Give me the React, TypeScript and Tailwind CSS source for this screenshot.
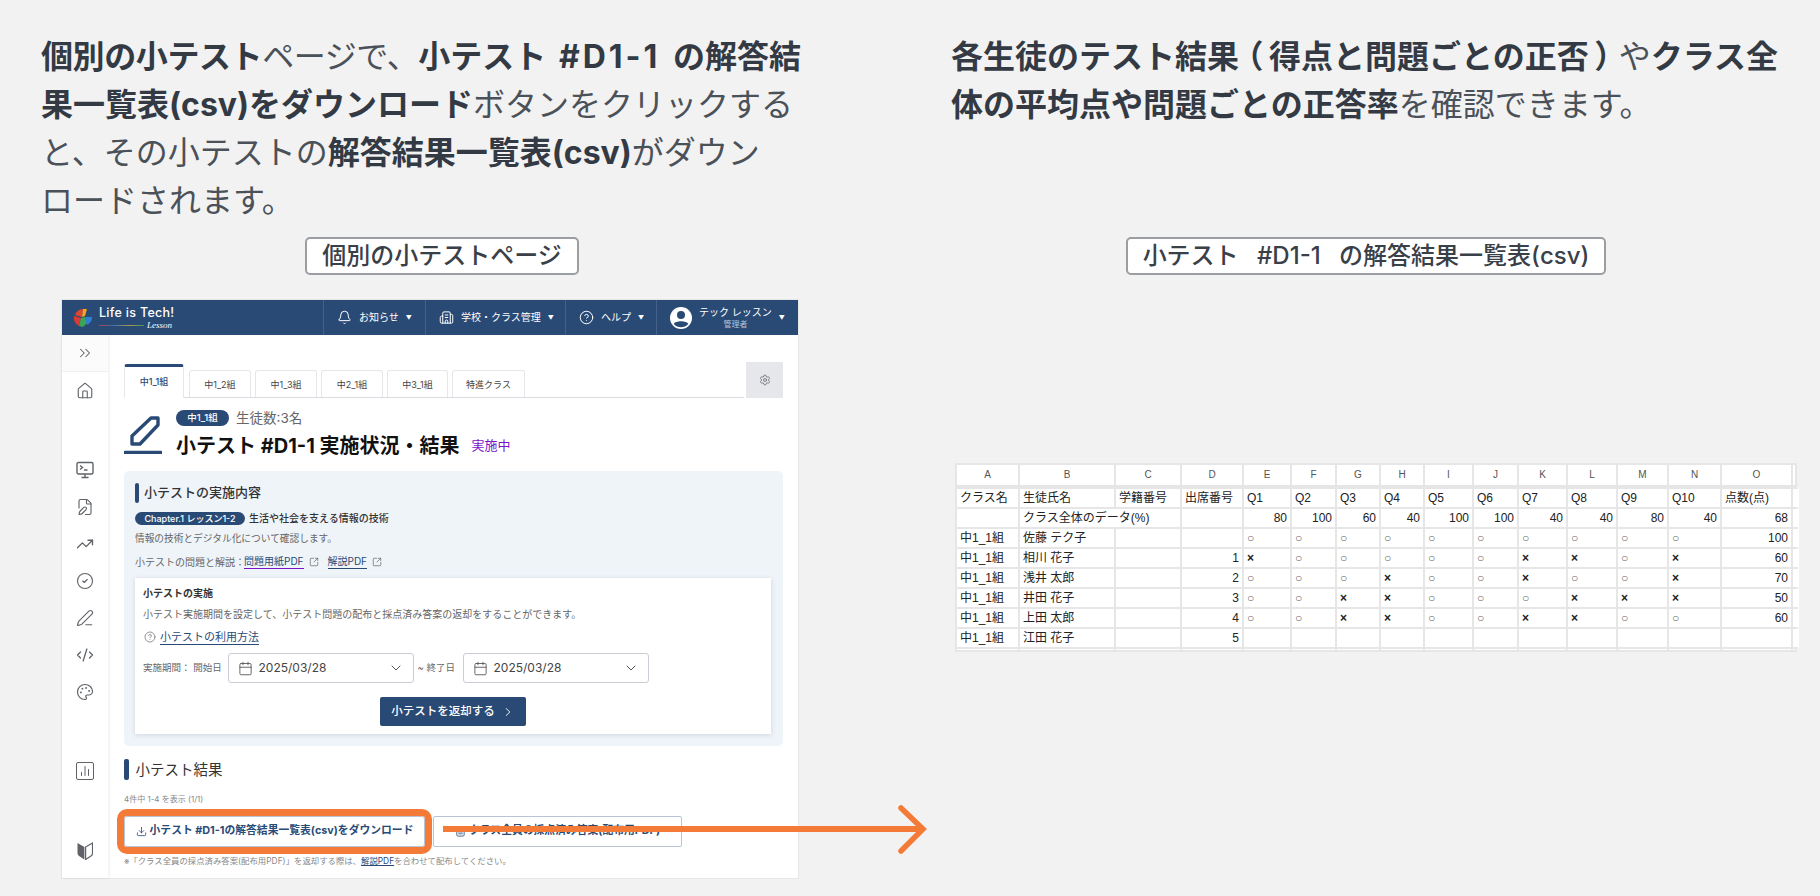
import {
  Bell, Building2, Calendar, ChevronDown, ChevronRight, ChevronsRight, CircleCheck, CircleHelp,
  CodeXml, Download, FilePen, FileText, House, Palette, PenLine, Settings, SquareArrowOutUpRight,
  TrendingUp, ChartNoAxesColumn,
} from 'lucide-react';

const cols = ['A', 'B', 'C', 'D', 'E', 'F', 'G', 'H', 'I', 'J', 'K', 'L', 'M', 'N', 'O', ''];
const percents = ['80', '100', '60', '40', '100', '100', '40', '40', '80', '40', '68'];
const students = [
  { name: '佐藤 テク子', no: '', marks: 'oooooooooo', score: '100' },
  { name: '相川 花子', no: '1', marks: 'xoooooxxox', score: '60' },
  { name: '浅井 太郎', no: '2', marks: 'oooxooxoox', score: '70' },
  { name: '井田 花子', no: '3', marks: 'ooxxoooxxx', score: '50' },
  { name: '上田 太郎', no: '4', marks: 'ooxxooxxoo', score: '60' },
  { name: '江田 花子', no: '5', marks: '', score: '' },
];
const qs = ['Q1', 'Q2', 'Q3', 'Q4', 'Q5', 'Q6', 'Q7', 'Q8', 'Q9', 'Q10'];

function Cell({ children, right, className = '' }: { children?: React.ReactNode; right?: boolean; className?: string }) {
  return (
    <div className={`bg-white h-[18px] leading-[18px] px-[3px] whitespace-nowrap overflow-hidden text-[12px] text-[#222] ${right ? 'text-right' : ''} ${className}`}>
      {children}
    </div>
  );
}

function Mark({ value }: { value?: string }) {
  if (!value) return <Cell />;
  return (
    <Cell className={value === 'x' ? 'text-[9px] font-bold' : 'text-[8px] text-[#666]'}>
      {value === 'x' ? '×' : '○'}
    </Cell>
  );
}

function Sheet() {
  return (
    <div className="ml-[4px] w-[842px] bg-[#e6e6e6] p-[2px] mt-[188px] font-['Liberation_Sans','Noto_Sans_CJK_JP',sans-serif]">
      <div className="grid gap-[2px] grid-cols-[61px_94px_64px_60px_46px_43px_42px_42px_47px_43px_47px_48px_49px_51px_69px_2px]">
        {cols.map((c, i) => (
          <div key={i} className="bg-white h-[20px] leading-[20px] text-center text-[10px] text-[#555] mb-[2px]">{c}</div>
        ))}
        <Cell>クラス名</Cell>
        <Cell>生徒氏名</Cell>
        <Cell>学籍番号</Cell>
        <Cell>出席番号</Cell>
        {qs.map((q) => <Cell key={q}>{q}</Cell>)}
        <Cell>点数(点)</Cell>
        <Cell className="px-0" />

        <Cell />
        <Cell className="col-span-2">クラス全体のデータ(%)</Cell>
        <Cell />
        {percents.map((p, i) => <Cell key={i} right>{p}</Cell>)}
        <Cell className="px-0" />

        {students.map((s) => (
          <div key={s.name} className="contents">
            <Cell>中1_1組</Cell>
            <Cell>{s.name}</Cell>
            <Cell />
            <Cell right>{s.no}</Cell>
            {qs.map((q, i) => <Mark key={q} value={s.marks[i]} />)}
            <Cell right>{s.score}</Cell>
            <Cell className="px-0" />
          </div>
        ))}
        {cols.map((c, i) => (
          <div key={i} className="bg-white h-[1px]" />
        ))}
      </div>
    </div>
  );
}

function Logo() {
  return (
    <div className="flex items-center w-[252px] pl-[2px]">
      <svg width="20" height="20" viewBox="0 0 20 20" className="mr-[6px]">
        <path d="M10 1 A9 9 0 0 0 2 7 L9 9 Z" fill="#e0452f" />
        <path d="M10 1 L14 1 L12 8 L9 9 Z" fill="#f2a61f" />
        <path d="M1 8 L8 10 L6 18 A9 9 0 0 1 1 8 Z" fill="#d93a33" />
        <path d="M8 10 L12 9 L14 15 L10 19 L6 18 Z" fill="#3aa655" />
        <path d="M12 9 L19 9 A9 9 0 0 1 14 17 Z" fill="#2f7fd6" />
      </svg>
      <div className="flex flex-col font-['Inter',sans-serif] text-white">
        <span className="text-[12.5px] leading-[15px] font-medium tracking-[0.3px]">Life is Tech!</span>
        <div className="flex items-center h-[10px]">
          <span className="w-[45px] h-[1px] bg-[linear-gradient(90deg,#b5413c,#3f6fb0,#a89a4a,#3f9a5a)]" />
          <span className="ml-[3px] text-[9px] leading-[9px] italic font-['Liberation_Serif',serif]">Lesson</span>
        </div>
      </div>
    </div>
  );
}

function NavItem({ icon, label, w, sub }: { icon: React.ReactNode; label: string; w: string; sub?: string }) {
  return (
    <div className={`flex items-center h-full border-l border-[#45608a] pl-[13px] text-white ${w}`}>
      {icon}
      {sub ? (
        <div className="flex flex-col items-center ml-[7px]">
          <span className="text-[10px] leading-[13px]">{label}</span>
          <span className="text-[8px] leading-[11px] text-[#b8c4d6]">{sub}</span>
        </div>
      ) : (
        <span className="text-[10px] ml-[7px]">{label}</span>
      )}
      <span className="ml-[7px] text-[6px]">▼</span>
    </div>
  );
}

function Header() {
  return (
    <div className="flex items-center h-[35px] bg-[#2a4a76] pl-[9px] shrink-0">
      <Logo />
      <NavItem w="w-[102px]" icon={<Bell size={15} strokeWidth={1.6} />} label="お知らせ" />
      <NavItem w="w-[140px]" icon={<Building2 size={15} strokeWidth={1.6} />} label="学校・クラス管理" />
      <NavItem w="w-[91px]" icon={<CircleHelp size={15} strokeWidth={1.6} />} label="ヘルプ" />
      <NavItem
        w="flex-1"
        icon={
          <svg width="22" height="22" viewBox="0 0 22 22">
            <circle cx="11" cy="11" r="11" fill="#fff" />
            <circle cx="11" cy="8" r="4" fill="#2a4a76" />
            <path d="M3.8 17 C5 13.4 17 13.4 18.2 17 A9.6 9.6 0 0 1 3.8 17 Z" fill="#2a4a76" />
          </svg>
        }
        label="テック レッスン"
        sub="管理者"
      />
    </div>
  );
}

function Sidebar() {
  const c = 'text-[#5f6368] shrink-0';
  return (
    <div className="w-[46px] shrink-0 flex flex-col items-center shadow-[1px_0_3px_rgba(0,0,0,0.08)] bg-white">
      <div className="h-[37px] w-full flex items-center justify-center border-b border-[#f0f0f0] bg-[#fbfbfb]">
        <ChevronsRight size={18} strokeWidth={1.4} className={c} />
      </div>
      <House size={18} strokeWidth={1.5} className={`${c} mt-[10px]`} />
      <div className="mt-[61px] flex flex-col items-center gap-[19px]">
        <svg width="18" height="18" viewBox="0 0 18 18" fill="none" stroke="#5f6368" strokeWidth="1.4" className="shrink-0">
          <rect x="1" y="1.5" width="16" height="11.5" rx="1.5" />
          <path d="M9 13v3M5.5 16.5h7M4 4.5l2.5 2-2.5 2M8 9h3.5" />
        </svg>
        <FilePen size={18} strokeWidth={1.5} className={c} />
        <TrendingUp size={18} strokeWidth={1.8} className={c} />
        <CircleCheck size={18} strokeWidth={1.5} className={c} />
        <PenLine size={18} strokeWidth={1.5} className={c} />
        <CodeXml size={18} strokeWidth={1.7} className={c} />
        <Palette size={18} strokeWidth={1.6} className={c} />
      </div>
      <div className="mt-[61px] w-[18px] h-[18px] border-[1.5px] border-[#5f6368] rounded-[2px] flex items-center justify-center">
        <ChartNoAxesColumn size={12} strokeWidth={2} className={c} />
      </div>
      <svg width="16" height="18" viewBox="0 0 16 18" className="mt-[62px]">
        <path d="M0.5 1 L7.4 5 V17.5 L2 14 Q0.5 13 0.5 11 Z" fill="#5f6368" />
        <path d="M15.5 1 L8.6 5 V17.5 L14 14 Q15.5 13 15.5 11 Z" fill="none" stroke="#5f6368" strokeWidth="1.2" />
      </svg>
    </div>
  );
}

function Tabs() {
  const names = [
    ['中1_2組', 'w-[62px]'],
    ['中1_3組', 'w-[62px]'],
    ['中2_1組', 'w-[62px]'],
    ['中3_1組', 'w-[61px]'],
    ['特進クラス', 'w-[73px]'],
  ];
  return (
    <div className="mt-[27px] flex items-end h-[36px]">
      <div className="flex-1 flex items-end h-[34px] border-b border-[#d9dce0] gap-[4px]">
        <div className="w-[60px] h-[34px] border-t-[3px] border-x border-[#2a4a76] border-x-[#e5e7eb] rounded-t-[3px] bg-white text-center text-[9px] leading-[29px] font-medium text-[#2a4a76] mr-[1px] -mb-[1px]">
          中1_1組
        </div>
        {names.map(([n, w]) => (
          <div key={n} className={`${w} h-[27px] border border-b-0 border-[#e5e7eb] rounded-t-[3px] text-center text-[9px] leading-[27px] text-[#444]`}>
            {n}
          </div>
        ))}
      </div>
      <div className="w-[37px] h-[36px] ml-[2px] bg-[#e5e7eb] flex items-center justify-center">
        <Settings size={12} strokeWidth={1.5} className="text-[#5f6368]" />
      </div>
    </div>
  );
}

function TitleBlock() {
  return (
    <div className="mt-[12px] flex h-[52px]">
      <svg width="38" height="38" viewBox="0 0 38 38" fill="none" stroke="#2a4a76" className="mt-[6px] shrink-0">
        <path d="M8 28 V20 L27 2 L34 2 L34 9 L16 28 Z" strokeWidth="3.4" strokeLinejoin="round" />
        <path d="M1 36.5 H37" strokeWidth="3.4" strokeLinecap="round" />
      </svg>
      <div className="ml-[14px] flex flex-col">
        <div className="flex items-center h-[16px]">
          <span className="w-[53px] h-[16px] rounded-full bg-[#2a4a76] text-white text-[9.5px] leading-[16px] text-center font-medium">中1_1組</span>
          <span className="ml-[7px] text-[13.5px] text-[#666]">生徒数:3名</span>
        </div>
        <div className="flex items-center mt-[7px] h-[26px]">
          <span className="text-[20px] font-bold text-[#111] whitespace-nowrap">小テスト #D1-1 実施状況・結果</span>
          <span className="ml-[12px] text-[13px] text-[#7a12c9]">実施中</span>
        </div>
      </div>
    </div>
  );
}

function DateInput() {
  return (
    <div className="w-[186px] h-[30px] border border-[#c9ced6] rounded-[3px] bg-white flex items-center pl-[9px] pr-[9px] shrink-0">
      <Calendar size={15} strokeWidth={1.4} className="text-[#555]" />
      <span className="ml-[6px] text-[12px] text-[#444] font-['Inter',sans-serif]">2025/03/28</span>
      <ChevronDown size={16} strokeWidth={1.5} className="ml-auto text-[#555]" />
    </div>
  );
}

function ContentPanel() {
  return (
    <div className="mt-[9px] bg-[#eff4f9] rounded-[5px] pt-[12px] pb-[12px] pl-[11px] pr-[12px]">
      <div className="flex items-center h-[20px]">
        <span className="w-[4px] h-[20px] rounded-[2px] bg-[#2a4a76]" />
        <span className="ml-[5px] text-[13px] font-medium text-[#333]">小テストの実施内容</span>
      </div>
      <div className="flex items-center h-[13px] mt-[9px]">
        <span className="w-[110px] h-[13px] rounded-full bg-[#2a4a76] text-white text-[9px] leading-[13px] text-center font-medium whitespace-nowrap">Chapter.1 レッスン1-2</span>
        <span className="ml-[4px] text-[10px] font-medium text-[#333]">生活や社会を支える情報の技術</span>
      </div>
      <div className="h-[14px] mt-[7px] text-[9.7px] leading-[14px] text-[#666]">情報の技術とデジタル化について確認します。</div>
      <div className="flex items-center h-[14px] mt-[9px] text-[10px] text-[#666] whitespace-nowrap">
        <span className="w-[109px]">小テストの問題と解説：</span>
        <span className="text-[#2a4a76] border-b border-[#7a12c9] leading-[13px]">問題用紙PDF</span>
        <SquareArrowOutUpRight size={10} strokeWidth={1.5} className="ml-[5px] text-[#555]" />
        <span className="ml-[9px] text-[#2a4a76] border-b border-[#2a4a76] leading-[13px]">解説PDF</span>
        <SquareArrowOutUpRight size={10} strokeWidth={1.5} className="ml-[5px] text-[#555]" />
      </div>
      <div className="mt-[9px] bg-white shadow-[0_1px_5px_rgba(60,80,110,0.18)] pt-[8px] pb-[8px] pl-[8px] flex flex-col h-[156px]">
        <div className="h-[14px] text-[10px] leading-[14px] font-bold text-[#333]">小テストの実施</div>
        <div className="h-[14px] mt-[7px] text-[10px] leading-[14px] text-[#666]">小テスト実施期間を設定して、小テスト問題の配布と採点済み答案の返却をすることができます。</div>
        <div className="flex items-center h-[16px] mt-[8px]">
          <CircleHelp size={12} strokeWidth={1.4} className="text-[#666] ml-[1px]" />
          <span className="ml-[4px] text-[11px] leading-[14px] text-[#2a4a76] border-b border-[#2a4a76]">小テストの利用方法</span>
        </div>
        <div className="flex items-center h-[30px] mt-[8px] text-[9.5px] text-[#666] whitespace-nowrap">
          <span className="w-[84.5px]">実施期間： 開始日</span>
          <DateInput />
          <span className="w-[49px] pl-[4px]">~ 終了日</span>
          <DateInput />
        </div>
        <div className="self-center -ml-[8px] mt-[14px] w-[146px] h-[29px] rounded-[2px] bg-[#2a4a76] text-white text-[11.5px] font-medium flex items-center justify-center">
          小テストを返却する
          <ChevronRight size={14} strokeWidth={1.6} className="ml-[6px]" />
        </div>
      </div>
    </div>
  );
}

function ResultPanel() {
  return (
    <>
      <div className="flex items-center h-[21px] mt-[13px]">
        <span className="w-[4.5px] h-[21px] rounded-[2px] bg-[#2a4a76]" />
        <span className="ml-[7px] text-[14.5px] text-[#333]">小テスト結果</span>
      </div>
      <div className="h-[10px] mt-[14px] text-[8px] leading-[10px] text-[#888]">4件中 1-4 を表示 (1/1)</div>
      <div className="flex h-[31px] mt-[12px] gap-[8px]">
        <div className="w-[301px] h-[31px] border border-[#b9c5d5] bg-white flex items-center justify-center text-[10.8px] font-bold text-[#2a4a76] whitespace-nowrap outline-[7px] outline-solid outline-[#f47a37] rounded-[3px]">
          <Download size={11} strokeWidth={1.8} className="mr-[3px]" />
          小テスト #D1-1の解答結果一覧表(csv)をダウンロード
        </div>
        <div className="w-[249px] h-[31px] border border-[#b9c5d5] rounded-[2px] bg-white flex items-center justify-center text-[10.8px] font-bold text-[#2a4a76] whitespace-nowrap">
          <FileText size={11} strokeWidth={1.8} className="mr-[3px]" />
          クラス全員の採点済み答案(配布用PDF)
        </div>
      </div>
      <div className="h-[10px] mt-[9px] text-[8.4px] leading-[10px] text-[#888] whitespace-nowrap">
        ※「クラス全員の採点済み答案(配布用PDF)」を返却する際は、<span className="underline text-[#2a4a76]">解説PDF</span>を合わせて配布してください。
      </div>
    </>
  );
}

function ScreenFrame() {
  return (
    <div className="relative ml-[20px] mt-[24px] w-[738px] h-[580px] border border-[#e6e6e6] bg-white flex flex-col">
      <Header />
      <div className="flex flex-1 min-h-0">
        <Sidebar />
        <div className="flex-1 min-w-0 pl-[16px] pr-[15px]">
          <Tabs />
          <TitleBlock />
          <ContentPanel />
          <ResultPanel />
        </div>
      </div>
      <svg width="500" height="60" viewBox="0 0 500 60" fill="none" stroke="#f47a37" className="absolute left-[381px] top-[499px]">
        <path d="M0 30 H476" strokeWidth="6" />
        <path d="M458 9 L480 30 L458 52" strokeWidth="5.5" strokeLinecap="round" strokeLinejoin="miter" />
      </svg>
    </div>
  );
}

function Label({ children }: { children: React.ReactNode }) {
  return (
    <div className="self-center mt-[12px] h-[38px] px-[15px] flex items-center bg-white border-2 border-[#9a9ea3] rounded-[5px] text-[24px] font-medium text-[#3a4048] whitespace-nowrap [word-spacing:12px]">
      {children}
    </div>
  );
}

export default function App() {
  return (
    <div className="w-[1820px] h-[896px] overflow-hidden bg-[#f2f2f2] pl-[41px] pt-[33px] flex gap-[108px] text-[#333a44] font-['Inter','Noto_Sans_CJK_JP','Noto_Sans',sans-serif]">
      <div className="w-[802px] shrink-0 flex flex-col">
        <p className="w-[790px] h-[192px] text-[32px] leading-[48px] text-[#4b5158]">
          <span className="tracking-[-0.4px]"><b className="text-[#333a44]">個別の小テスト</b>ページで、</span><b className="text-[#333a44] [word-spacing:5px]">小テスト <span className="tracking-[3px]">#D1-1</span> の解答結</b>
          <br />
          <b className="text-[#333a44]">果一覧表(csv)をダウンロード</b>ボタンをクリックする
          <br />
          と、その小テストの<b className="text-[#333a44]">解答結果一覧表(csv)</b>がダウン
          <br />
          ロードされます。
        </p>
        <Label>個別の小テストページ</Label>
        <ScreenFrame />
      </div>
      <div className="w-[830px] shrink-0 flex flex-col">
        <p className="w-[836px] h-[192px] text-[32px] leading-[48px] text-[#4b5158]">
          <b className="text-[#333a44]">各生徒のテスト結果<span className="mx-[7px] [font-feature-settings:'palt']">（</span>得点と問題ごとの正否<span className="mx-[7px] [font-feature-settings:'palt']">）</span></b>や<b className="text-[#333a44]">クラス全</b>
          <br />
          <b className="text-[#333a44]">体の平均点や問題ごとの正答率</b>を確認できます。
        </p>
        <Label>小テスト #D1-1 の解答結果一覧表(csv)</Label>
        <Sheet />
      </div>
    </div>
  );
}
